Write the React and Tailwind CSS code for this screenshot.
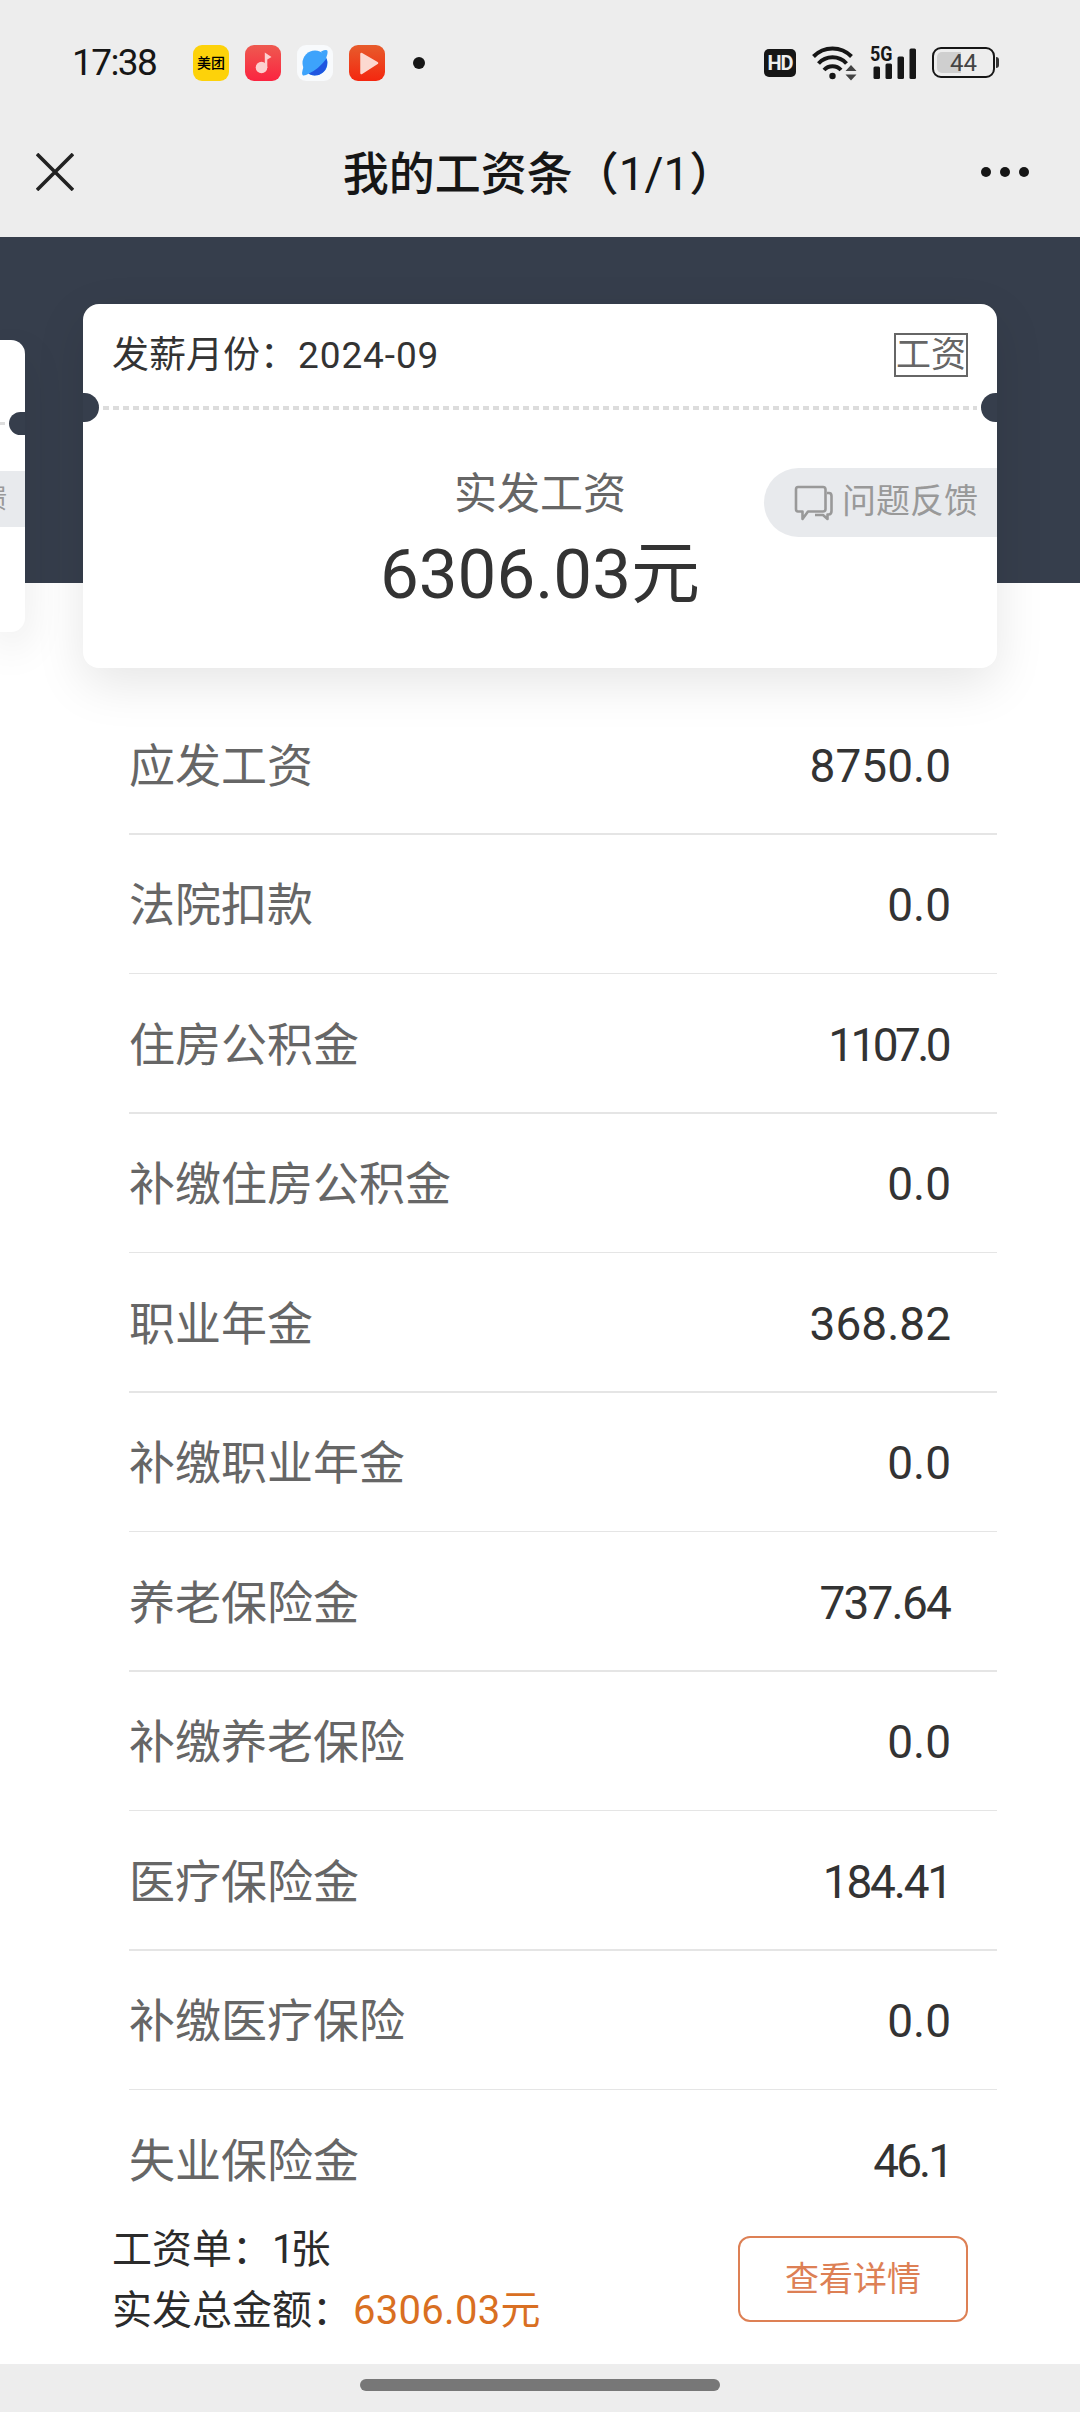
const rows = [
  { label: "应发工资", value: "8750.0" },
  { label: "法院扣款", value: "0.0" },
  { label: "住房公积金", value: "1107.0", tracking: "tracking-[-3.6px] pr-[3px]" },
  { label: "补缴住房公积金", value: "0.0" },
  { label: "职业年金", value: "368.82" },
  { label: "补缴职业年金", value: "0.0" },
  { label: "养老保险金", value: "737.64", tracking: "tracking-[-1.8px] pr-px" },
  { label: "补缴养老保险", value: "0.0" },
  { label: "医疗保险金", value: "184.41", tracking: "tracking-[-2.2px]" },
  { label: "补缴医疗保险", value: "0.0" },
  { label: "失业保险金", value: "46.1", tracking: "tracking-[-3px]" },
];

const AppIcons = () => (
  <div className="ml-[37px] flex items-center gap-4">
    <div className="flex h-9 w-9 items-center justify-center rounded-[9px] bg-[#fdd20a] text-[14px] leading-none font-medium text-black">
      美团
    </div>
    <svg className="h-9 w-9" viewBox="0 0 36 36">
      <defs>
        <linearGradient id="music" x1="0" y1="0" x2="0" y2="1">
          <stop offset="0" stopColor="#ee5a50" />
          <stop offset="1" stopColor="#fb2440" />
        </linearGradient>
      </defs>
      <rect width="36" height="36" rx="9" fill="url(#music)" />
      <circle cx="16.5" cy="22.5" r="5.8" fill="#fcd0cf" />
      <path d="M19.800 7.500 L26.500 12 L22.300 14.500 V23 H19.800 Z" fill="#fcd0cf" />
    </svg>
    <svg className="h-9 w-9" viewBox="0 0 36 36">
      <rect width="36" height="36" rx="9" fill="#f8fafc" />
      <circle cx="18" cy="18" r="12.5" fill="#3da3fb" />
      <path d="M29.500 13.500 A12.500 12.500 0 0 1 11.500 28.700 Q22 24 29.500 13.500 Z" fill="#1f55e0" />
      <path d="M24 6.500 Q30 4 30.500 6 Q31 9 28.500 14 Z M6.500 22 Q4 29 6 30.500 Q8 31 12 28.500 Z" fill="#3da3fb" />
    </svg>
    <svg className="h-9 w-9" viewBox="0 0 36 36">
      <defs>
        <linearGradient id="video" x1="0" y1="0" x2="0" y2="1">
          <stop offset="0" stopColor="#e75c2c" />
          <stop offset="1" stopColor="#f4270f" />
        </linearGradient>
      </defs>
      <rect width="36" height="36" rx="9" fill="url(#video)" />
      <path d="M12.500 9 L28 18 L12.500 28 Z" fill="#fcd9d0" stroke="#fcd9d0" strokeWidth="2.5" strokeLinejoin="round" />
    </svg>
    <div className="ml-3 h-3 w-3 rounded-full bg-[#161616]" />
  </div>
);

const Wifi = () => (
  <svg className="ml-4 h-9 w-[46px]" viewBox="0 0 46 36" fill="none" stroke="#161616" strokeWidth="4">
    <path d="M1.500 11.500 A26.500 26.500 0 0 1 39.500 11.500" />
    <path d="M6.500 18.500 A19 19 0 0 1 34.500 18.500" />
    <path d="M12 25 A11.500 11.500 0 0 1 29 25" />
    <circle cx="20.5" cy="31" r="3.2" fill="#161616" stroke="none" />
    <path d="M33.500 26 L39 20 L44.500 26 Z M33.500 29.500 L39 35.500 L44.500 29.500 Z" fill="#444" stroke="none" />
  </svg>
);

const Signal = () => (
  <div className="ml-3 flex items-center">
    <svg className="h-9 w-[47px] overflow-visible" viewBox="0 0 47 36" fill="#161616">
      <text x="0" y="16" fontSize="20" fontWeight="700" textLength="22.5" lengthAdjust="spacingAndGlyphs">
        5G
      </text>
      <rect x="3.5" y="21.5" width="6.5" height="12.5" rx="1.5" />
      <rect x="15.5" y="18.5" width="6.5" height="15.5" rx="1.5" />
      <rect x="27.5" y="11.5" width="6.5" height="22.5" rx="1.5" />
      <rect x="39.5" y="3.5" width="6.5" height="30.5" rx="1.5" />
    </svg>
  </div>
);

const Battery = () => (
  <div className="ml-[15px] flex items-center gap-px">
    <div className="relative flex h-[31px] w-[63px] items-center justify-center rounded-[9px] border-2 border-[#161616]">
      <div className="absolute top-[3px] left-[3px] h-[21px] w-6 rounded-l-[5px] bg-[#cfcfcf]" />
      <span className="relative text-[24px] leading-none text-[#444]">44</span>
    </div>
    <div className="h-[11px] w-[3px] rounded-r-sm bg-[#333]" />
  </div>
);

const StatusBar = () => (
  <div className="flex h-[106px] items-center justify-between pt-[19px] pr-[81px] pl-[72px]">
    <div className="flex items-center">
      <span className="w-[84px] text-[37px] leading-none tracking-[-1.6px] whitespace-nowrap text-[#161616]">17:38</span>
      <AppIcons />
    </div>
    <div className="flex items-center">
      <div className="flex h-7 w-8 items-center justify-center rounded-[5px] bg-[#161616] text-[20px] leading-none font-bold tracking-[-1px] text-[#eee]">
        HD
      </div>
      <Wifi />
      <Signal />
      <Battery />
    </div>
  </div>
);

const TitleBar = () => (
  <div className="flex h-[131px] items-center justify-between pr-[51px] pl-9">
    <svg className="h-[38px] w-[38px]" viewBox="0 0 38 38" stroke="#222" strokeWidth="3.6">
      <path d="M1 1 L37 37 M37 1 L1 37" />
    </svg>
    <h1 className="ml-[23px] pt-1 text-[46px] leading-none font-medium whitespace-nowrap text-[#161616]">
      我的工资条（<span className="font-normal">1/1</span>）
    </h1>
    <div className="flex gap-[9px]">
      <i className="h-[10px] w-[10px] rounded-full bg-[#161616]" />
      <i className="h-[10px] w-[10px] rounded-full bg-[#161616]" />
      <i className="h-[10px] w-[10px] rounded-full bg-[#161616]" />
    </div>
  </div>
);

// edge of the neighbouring slide in the carousel
const PrevCard = () => (
  <div className="mt-9 h-[292px] w-[25px] shrink-0 overflow-hidden rounded-r-[14px] bg-white pt-[72px] shadow-[0_16px_40px_rgba(0,0,0,0.1)]">
    <div className="flex h-[23px] items-center justify-between">
      <div className="h-[3px] w-[5px] bg-[#ddd]" />
      <div className="h-[23px] w-4 rounded-l-full bg-[#363e4c]" />
    </div>
    <div className="mt-9 flex h-14 items-center justify-end bg-[#e8eaed] pr-[18px] text-[27px] text-[#999]">馈</div>
  </div>
);

const Card = () => (
  <div className="h-[364px] w-[914px] shrink-0 rounded-2xl bg-white shadow-[0_16px_50px_rgba(0,0,0,0.1)]">
    <div className="flex h-[89px] items-center justify-between px-[29px] pt-[13px]">
      <div className="pt-px text-[37px] leading-none text-[#333]">
        发薪月份：<span className="ml-px tracking-[0.9px]">2024-09</span>
      </div>
      <div className="flex h-11 items-center border-2 border-[#666] pt-px text-[35px] leading-none text-[#666]">工资</div>
    </div>
    <div className="flex h-[29px] items-center justify-between">
      <div className="h-[29px] w-4 rounded-r-full bg-[#363e4c]" />
      <div className="h-1 w-[874px] bg-[repeating-linear-gradient(90deg,#dcdcdc_0_6px,transparent_6px_10px)]" />
      <div className="h-[29px] w-4 rounded-l-full bg-[#363e4c]" />
    </div>
    <div className="relative flex flex-col items-center pt-[49px]">
      <div className="text-[43px] leading-[46px] text-[#666]">实发工资</div>
      <div className="mt-[22px] text-[69px] leading-[72px] text-[#333]">6306.03元</div>
      <button className="absolute top-[46px] right-0 flex h-[69px] w-[233px] items-center rounded-l-full bg-[#e8eaed] pb-[3px] pl-[30px] text-[34px] leading-none whitespace-nowrap text-[#999]">
        <svg className="mt-[3px] mr-[9px] h-9 w-[39px] shrink-0" viewBox="0 0 39 36" fill="none" stroke="#999" strokeWidth="2.6" strokeLinejoin="round">
          <path d="M4 2 H29 Q31.500 2 31.500 4.500 V24 Q31.500 26.500 29 26.500 H14 L8.500 34 V26.500 H4 Q2 26.500 2 24 V4.500 Q2 2 4 2 Z" />
          <path d="M33 8 H35 Q37.500 8 37.500 11 V26 Q37.500 29.500 34.500 29.500 H33.500 V34 L29 30 H21" />
        </svg>
        问题反馈
      </button>
    </div>
  </div>
);

const Row = ({ label, value, tracking = "" }) => (
  <div className="ml-[129px] w-[868px]">
    <div className="flex h-[138px] items-center justify-between pt-[3px] pr-[46px] text-[46px] leading-none">
      <span className="text-[#666]">{label}</span>
      <span className={`text-[#333] ${tracking}`}>{value}</span>
    </div>
    <div className="h-[1.5px] bg-[#e5e5e5]" />
  </div>
);

const Footer = () => (
  <div className="flex h-[144px] items-center justify-between bg-white px-[112px] pb-[26px]">
    <div className="pt-[2px] text-[40px] leading-[61px] text-[#2b2b2b]">
      <div>
        工资单：<span className="tracking-[-4px]">1</span>张
      </div>
      <div>
        实发总金额：<span className="ml-px tracking-[0.3px] text-[#d96f22]">6306.03元</span>
      </div>
    </div>
    <button className="h-[86px] w-[230px] rounded-xl border-2 border-[#dd8055] text-[34px] leading-none text-[#dd8055]">查看详情</button>
  </div>
);

const App = () => {
  return (
    <div className="flex h-[2412px] w-[1080px] flex-col overflow-hidden bg-white font-['Roboto','Noto_Sans_CJK_SC',sans-serif]">
      <header className="h-[237px] shrink-0 bg-[#ededed]">
        <StatusBar />
        <TitleBar />
      </header>
      <section className="flex h-[458px] shrink-0 gap-[58px] bg-[linear-gradient(#363e4c_346px,transparent_346px)] pt-[67px]">
        <PrevCard />
        <Card />
      </section>
      <main className="h-[1525px] shrink-0 overflow-hidden">
        {rows.map((row) => (
          <Row key={row.label} {...row} />
        ))}
      </main>
      <Footer />
      <div className="flex h-12 items-center justify-center bg-[#ededed] pb-[6px]">
        <div className="h-3 w-[360px] rounded-full bg-[#777]" />
      </div>
    </div>
  );
};

export default App;
